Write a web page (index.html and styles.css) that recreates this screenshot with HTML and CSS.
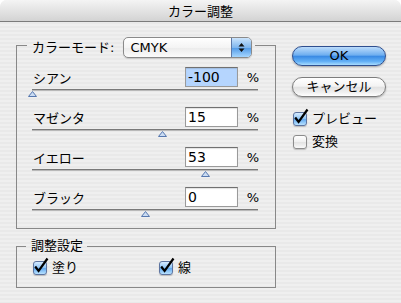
FILE: index.html
```html
<!DOCTYPE html>
<html lang="ja">
<head>
    <meta charset="UTF-8">
    <title>カラー調整</title>
    <link rel="stylesheet" href="styles.css">
</head>
<body>
<div class="window">
    <div class="titlebar">カラー調整</div>
    <div class="content">
        <div class="left-col">
            <!-- Color mode group -->
            <div class="group">
                <div class="group-head mode-head">
                    <span class="rule rule-start"></span>
                    <span class="group-title">カラーモード:</span>
                    <div class="popup">
                        <span class="popup-value">CMYK</span>
                        <span class="popup-arrows">
                            <svg width="7" height="11" viewBox="0 0 7 11"><path d="M3.5 1 L6.5 4.5 L0.5 4.5 Z M3.5 10 L6.5 6.5 L0.5 6.5 Z" fill="#111"/></svg>
                        </span>
                    </div>
                    <span class="rule rule-end"></span>
                </div>
                <div class="group-body">
                    <div class="slider-row">
                        <div class="value-line">
                            <span class="row-label">シアン</span>
                            <span class="field selected">-100</span>
                            <span class="unit">%</span>
                        </div>
                        <div class="track"></div>
                        <div class="thumb-line"><svg class="thumb" style="margin-left:-4px" width="9" height="6" viewBox="0 0 9 6"><path d="M4.5 0.5 L8.5 5.5 L0.5 5.5 Z"/></svg></div>
                    </div>
                    <div class="slider-row">
                        <div class="value-line">
                            <span class="row-label">マゼンタ</span>
                            <span class="field">15</span>
                            <span class="unit">%</span>
                        </div>
                        <div class="track"></div>
                        <div class="thumb-line"><svg class="thumb" style="margin-left:126px" width="9" height="6" viewBox="0 0 9 6"><path d="M4.5 0.5 L8.5 5.5 L0.5 5.5 Z"/></svg></div>
                    </div>
                    <div class="slider-row">
                        <div class="value-line">
                            <span class="row-label">イエロー</span>
                            <span class="field">53</span>
                            <span class="unit">%</span>
                        </div>
                        <div class="track"></div>
                        <div class="thumb-line"><svg class="thumb" style="margin-left:169px" width="9" height="6" viewBox="0 0 9 6"><path d="M4.5 0.5 L8.5 5.5 L0.5 5.5 Z"/></svg></div>
                    </div>
                    <div class="slider-row">
                        <div class="value-line">
                            <span class="row-label">ブラック</span>
                            <span class="field">0</span>
                            <span class="unit">%</span>
                        </div>
                        <div class="track"></div>
                        <div class="thumb-line"><svg class="thumb" style="margin-left:109px" width="9" height="6" viewBox="0 0 9 6"><path d="M4.5 0.5 L8.5 5.5 L0.5 5.5 Z"/></svg></div>
                    </div>
                </div>
            </div>

            <!-- Adjust options group -->
            <div class="group adjust-group">
                <div class="group-head adjust-head">
                    <span class="rule rule-start"></span>
                    <span class="group-title">調整設定</span>
                    <span class="rule rule-end"></span>
                </div>
                <div class="group-body adjust-body">
                    <label class="check-item wide">
                        <span class="checkbox"><svg class="check-mark" width="16" height="16" viewBox="0 0 16 16"><path d="M2.2 9.5 L5.6 14 L14.5 1.5"/></svg></span>
                        <span>塗り</span>
                    </label>
                    <label class="check-item">
                        <span class="checkbox"><svg class="check-mark" width="16" height="16" viewBox="0 0 16 16"><path d="M2.2 9.5 L5.6 14 L14.5 1.5"/></svg></span>
                        <span>線</span>
                    </label>
                </div>
            </div>
        </div>

        <div class="right-col">
            <div class="btn btn-default">OK</div>
            <div class="btn btn-cancel">キャンセル</div>
            <label class="check-item preview-check">
                <span class="checkbox"><svg class="check-mark" width="16" height="16" viewBox="0 0 16 16"><path d="M2.2 9.5 L5.6 14 L14.5 1.5"/></svg></span>
                <span>プレビュー</span>
            </label>
            <label class="check-item convert-check">
                <span class="checkbox off"></span>
                <span>変換</span>
            </label>
        </div>
    </div>
</div>
</body>
</html>
```

FILE: styles.css
```css
/* Page */
body {
    margin: 0;
    background: #fff;
    font-family: "DejaVu Sans", "Noto Sans CJK JP", sans-serif;
    font-size: 13px;
    color: #000;
}

/* Window with aqua pinstripes */
.window {
    width: 401px;
    height: 303px;
    border-radius: 7px 7px 0 0;
    overflow: hidden;
    background: repeating-linear-gradient(to bottom, #efefef 0, #efefef 2px, #e9e9e9 2px, #e9e9e9 4px);
}

.titlebar {
    height: 21px;
    border-bottom: 1px solid #7b7b7b;
    background: linear-gradient(#f4f4f4, #d3d3d3);
    text-align: center;
    font-family: "Noto Sans CJK JP", sans-serif;
    font-size: 13px;
    line-height: 21px;
}

.content {
    display: flex;
}

.left-col {
    margin-left: 16px;
    width: 260px;
}

/* Group boxes */
.group-head {
    display: flex;
}

.mode-head {
    margin-top: 15px;
    height: 21px;
}

.rule {
    border-top: 1px solid #888;
    margin-top: 8px;
}

.rule-start {
    width: 10px;
    border-left: 1px solid #888;
}

.rule-end {
    flex: 1;
    border-right: 1px solid #888;
    margin-left: 3px;
}

.group-title {
    margin-left: 5px;
    line-height: 21px;
}

.group-body {
    border: 1px solid #888;
    border-top: none;
    padding: 9px 16px 11px 15px;
}

/* Popup menu */
.popup {
    display: flex;
    margin-left: 9px;
    width: 129px;
    height: 21px;
    box-sizing: border-box;
    border: 1px solid #8a8a8a;
    border-radius: 5px;
    overflow: hidden;
    background: linear-gradient(#ffffff, #f4f4f4 50%, #ebebeb 51%, #fbfbfb);
    box-shadow: 0 1px 1px rgba(0, 0, 0, 0.15);
}

.popup-value {
    flex: 1;
    padding-left: 6px;
    line-height: 19px;
}

.popup-arrows {
    width: 19px;
    display: flex;
    align-items: center;
    justify-content: center;
    border-left: 1px solid #5c78a8;
    background: linear-gradient(#cbe4fc, #7fb6ee 50%, #4f98e6 51%, #a5d6ff);
}

/* Slider rows */
.slider-row {
    margin-bottom: 10px;
}

.slider-row:last-child {
    margin-bottom: 0;
}

.value-line {
    display: flex;
    align-items: center;
    height: 20px;
}

.row-label {
    flex: 1;
    padding-left: 1px;
}

.field {
    width: 53px;
    height: 20px;
    box-sizing: border-box;
    border: 1px solid #9a9a9a;
    border-top-color: #707070;
    background: #fff;
    box-shadow: inset 0 1px 1px rgba(0, 0, 0, 0.12);
    padding: 1px 2px;
    font-size: 14px;
    line-height: 16px;
}

.field.selected {
    background: #b5d5fe;
}

.unit {
    width: 21px;
    text-align: right;
}

.track {
    margin-top: 2px;
    margin-right: 1px;
    height: 1px;
    border-top: 1px solid #7a7a7a;
    background: #b9b9b9;
}

.thumb-line {
    display: flex;
    height: 6px;
}

.thumb path {
    fill: #cadcf3;
    stroke: #5677ae;
    stroke-width: 1;
}

/* Adjust group */
.adjust-group {
    margin-top: 10px;
}

.adjust-head {
    height: 14px;
}

.adjust-head .rule {
    margin-top: 7px;
}

.adjust-head .rule-start {
    width: 9px;
}

.adjust-head .group-title {
    line-height: 14px;
}

.adjust-head .rule-end {
    margin-left: 4px;
}

.adjust-body {
    display: flex;
    padding: 8px 16px 12px 16px;
}

/* Check boxes */
.check-item {
    display: flex;
    align-items: center;
    gap: 5px;
    height: 14px;
    line-height: 14px;
}

.check-item.wide {
    width: 126px;
}

.checkbox {
    position: relative;
    width: 14px;
    height: 14px;
    box-sizing: border-box;
    border: 1px solid #5d74a0;
    border-radius: 3px;
    background: linear-gradient(#d6ebff, #8dc4f6 50%, #5fa7ef 51%, #b9e2ff);
    box-shadow: 0 1px 1px rgba(0, 0, 0, 0.2);
}

.checkbox.off {
    border-color: #8c8c8c;
    background: linear-gradient(#ffffff, #f0f0f0 50%, #e2e2e2 51%, #f9f9f9);
}

.check-mark {
    position: absolute;
    left: -1px;
    top: -5px;
}

.check-mark path {
    fill: none;
    stroke: #000;
    stroke-width: 2.2;
    stroke-linejoin: miter;
}

/* Right column buttons */
.right-col {
    margin-left: 16px;
    width: 94px;
}

.btn {
    height: 20px;
    box-sizing: border-box;
    border-radius: 10px;
    text-align: center;
    line-height: 18px;
    box-shadow: 0 1px 2px rgba(0, 0, 0, 0.3);
}

.btn-default {
    margin-top: 24px;
    border: 1px solid #2f4f8f;
    background: linear-gradient(#bcdcfb, #6eaef0 45%, #3a8ae4 52%, #63b0f6 80%, #a8dcff);
}

.btn-cancel {
    margin-top: 11px;
    border: 1px solid #7d7d7d;
    background: linear-gradient(#ffffff, #f3f3f3 45%, #e2e2e2 52%, #f0f0f0 80%, #ffffff);
}

.preview-check {
    margin-top: 15px;
    margin-left: 1px;
}

.convert-check {
    margin-top: 9px;
    margin-left: 1px;
}
```
